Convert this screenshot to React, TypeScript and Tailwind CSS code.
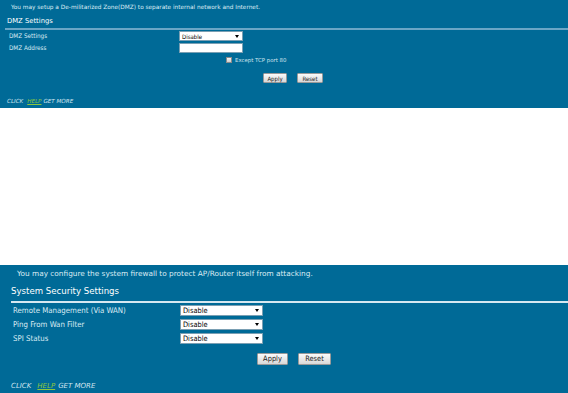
import React from "react";

const font = { fontFamily: '"DejaVu Sans", Verdana, sans-serif' };
const cond = { fontFamily: '"DejaVu Sans Condensed", "DejaVu Sans", Tahoma, sans-serif' };

function Select({ w, h, fs }: { w: string; h: string; fs: string }) {
  return (
    <div style={cond} className={`${w} ${h} bg-white border border-[#7a9fb3] flex items-center justify-between pl-[2px] pr-[3px] text-black ${fs}`}>
      <span>Disable</span>
      <span className="w-0 h-0 border-l-[2.5px] border-r-[2.5px] border-t-[3px] border-l-transparent border-r-transparent border-t-black" />
    </div>
  );
}

function Btn({ label, cls }: { label: string; cls: string }) {
  return (
    <div style={cond} className={`flex items-center justify-center bg-gradient-to-b from-[#fbfbfb] to-[#d8d8d8] border border-[#9a9a9a] rounded-[1px] text-[#222] ${cls}`}>
      {label}
    </div>
  );
}

export default function App() {
  return (
    <div style={font} className="w-[568px] h-[393px] bg-white flex flex-col">
      {/* Top DMZ section */}
      <div className="h-[108px] bg-[#006a97] text-[#dcecf4] flex flex-col">
        <div className="pl-[11px] pt-[4px] text-[5.8px] leading-[7px]">
          You may setup a De-militarized Zone(DMZ) to separate internal network and Internet.
        </div>
        <div className="pl-[7px] mt-[6px] text-[6.8px] leading-[9px] text-white">DMZ Settings</div>
        <div className="ml-[5px] mt-[2px] h-[2px] bg-[#6aa6c6]" />
        <div className="flex items-center mt-[1px] h-[10px]">
          <div style={cond} className="w-[179px] pl-[9px] text-[6.3px]">DMZ Settings</div>
          <Select w="w-[64px]" h="h-[10px]" fs="text-[6px]" />
        </div>
        <div className="flex items-center mt-[2px] h-[10px]">
          <div style={cond} className="w-[179px] pl-[9px] text-[6.3px]">DMZ Address</div>
          <div className="w-[64px] h-[10px] bg-white border border-[#7a9fb3]" />
        </div>
        <div className="flex items-center mt-[4px] h-[6px]">
          <div className="w-[226px]" />
          <div className="w-[6px] h-[6px] bg-gradient-to-b from-[#f4f4f4] to-[#cfcfcf] border border-[#8a8a8a]" />
          <div className="ml-[3px] text-[5.4px] text-[#cfe3ee]">Except TCP port 80</div>
        </div>
        <div className="flex items-center mt-[10px] h-[10px]">
          <div className="w-[263px]" />
          <Btn label="Apply" cls="w-[24px] h-[10px] text-[6px]" />
          <div className="w-[10px]" />
          <Btn label="Reset" cls="w-[26px] h-[10px] text-[6px]" />
        </div>
        <div className="pl-[7px] mt-[14px] text-[5.6px] italic text-[#d4e6f0] flex">
          <span>CLICK</span>
          <span className="ml-[4px] text-[#8cc63e] underline">HELP</span>
          <span className="ml-[2px]">GET MORE</span>
        </div>
      </div>

      <div className="h-[157px] bg-white" />

      {/* Bottom firewall section */}
      <div className="h-[128px] bg-[#006a97] text-[#dcecf4] flex flex-col">
        <div className="pl-[17px] pt-[4px] text-[7.35px] leading-[9px]">
          You may configure the system firewall to protect AP/Router itself from attacking.
        </div>
        <div className="pl-[11px] mt-[8px] text-[8.6px] leading-[11px] text-white">System Security Settings</div>
        <div className="ml-[11px] mt-[4px] h-[2px] bg-[#d6e8f1]" />
        <div className="flex flex-col gap-[3px] mt-[2px]">
          <div className="flex items-center h-[11px]">
            <div style={cond} className="w-[180px] pl-[13px] text-[7.8px]">Remote Management (Via WAN)</div>
            <Select w="w-[83px]" h="h-[11px]" fs="text-[7.4px]" />
          </div>
          <div className="flex items-center h-[11px]">
            <div style={cond} className="w-[180px] pl-[13px] text-[7.8px]">Ping From Wan Filter</div>
            <Select w="w-[83px]" h="h-[11px]" fs="text-[7.4px]" />
          </div>
          <div className="flex items-center h-[11px]">
            <div style={cond} className="w-[180px] pl-[13px] text-[7.8px]">SPI Status</div>
            <Select w="w-[83px]" h="h-[11px]" fs="text-[7.4px]" />
          </div>
        </div>
        <div className="flex items-center mt-[9px] h-[12px]">
          <div className="w-[257px]" />
          <Btn label="Apply" cls="w-[31px] h-[12px] text-[7.4px]" />
          <div className="w-[10px]" />
          <Btn label="Reset" cls="w-[33px] h-[12px] text-[7.4px]" />
        </div>
        <div className="pl-[11px] mt-[16px] text-[7px] italic text-[#d4e6f0] flex">
          <span>CLICK</span>
          <span className="ml-[6px] text-[#8cc63e] underline">HELP</span>
          <span className="ml-[3px]">GET MORE</span>
        </div>
      </div>
    </div>
  );
}
